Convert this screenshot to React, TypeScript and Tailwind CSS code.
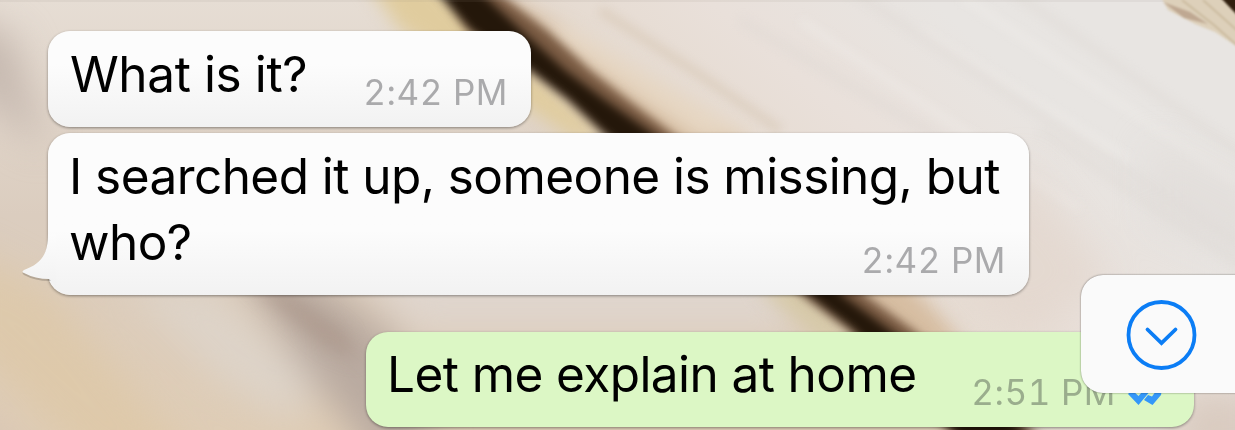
import type { ReactNode } from "react";

// blurred wooden planks used as the chat wallpaper
function Wallpaper() {
  return (
    <svg
      className="absolute inset-0 h-full w-full"
      viewBox="0 0 1235 430"
      preserveAspectRatio="none"
      colorInterpolationFilters="sRGB"
    >
      <defs>
        <linearGradient id="left" x1="0" y1="0" x2="0" y2="1">
          <stop offset="0" stopColor="#e6ddd4" />
          <stop offset="0.5" stopColor="#dbcdbf" />
          <stop offset="1" stopColor="#dfcdb6" />
        </linearGradient>
        <linearGradient id="right" gradientUnits="userSpaceOnUse" x1="690" y1="140" x2="860" y2="-60">
          <stop offset="0" stopColor="#e5dacf" />
          <stop offset="0.45" stopColor="#e9e0da" />
          <stop offset="1" stopColor="#e8e5e2" />
        </linearGradient>
        <filter id="soft1" x="-20%" y="-20%" width="140%" height="140%">
          <feGaussianBlur stdDeviation="1" />
        </filter>
        <filter id="soft5" x="-20%" y="-20%" width="140%" height="140%">
          <feGaussianBlur stdDeviation="5" />
        </filter>
        <filter id="soft9" x="-20%" y="-20%" width="140%" height="140%">
          <feGaussianBlur stdDeviation="9" />
        </filter>
        <filter id="soft18" x="-40%" y="-40%" width="180%" height="180%">
          <feGaussianBlur stdDeviation="18" />
        </filter>
      </defs>
      <rect width="1235" height="430" fill="url(#left)" />
      <path d="M460 -20H1260V460H1030L850 300L660 133Z" fill="url(#right)" />

      {/* left plank tones */}
      <g filter="url(#soft18)">
        <path d="M-40 10L15 40L45 150L-40 80Z" fill="#c6b9b0" />
        <path d="M-40 245L50 290L200 470H100L-40 340Z" fill="#dec6a2" opacity="0.6" />
        <path d="M-40 390L50 470H-40Z" fill="#d8c5b5" />
        <path d="M120 280L210 285L320 380L290 420L220 380Z" fill="#ddd3c8" />
        <path d="M235 260L310 275L400 340L440 470H385L305 370Z" fill="#b9aaa0" />
        <path d="M340 250H780L800 330H410Z" fill="#dfd5cd" />
      </g>
      <path d="M245 280L285 290L345 330L360 362L325 348Z" fill="#a58f82" opacity="0.5" filter="url(#soft9)" />

      {/* light edges and the gap between the planks */}
      <g filter="url(#soft9)">
        <path d="M365 -20H430L610 140H575L500 90L400 30Z" fill="#e0cc9e" />
        <path d="M755 285L800 285L860 340H820Z" fill="#d6c9a8" />
        <path d="M470 -20L570 30L735 140L925 300L965 345L910 350L640 140L470 0Z" fill="#d6bda1" />
        <path d="M570 30L760 140H700L530 25Z" fill="#e6d6c2" />
      </g>
      <g filter="url(#soft5)">
        <path d="M435 -12H492L548 31L590 70L628 100L678 138L868 297L916 332L1050 445H962L848 330L804 297L602 133L567 100L528 70L467 31Z" fill="#7a5b43" />
        <path d="M433 -12H476L522 31L565 70L605 100L652 133L845 297L890 330L1045 448H970L854 330L811 297L604 133L569 100L530 70L472 31Z" fill="#24170a" />
      </g>

      {/* faint grain on the right plank */}
      <g filter="url(#soft5)" fill="none" strokeWidth="9" opacity="0.35">
        <path d="M800 20L1080 210M920 30L1130 160M960 -5L1240 185" stroke="#f2efec" />
        <path d="M850 -10L1240 245M740 20L960 150" stroke="#dcd6d1" />
        <path d="M1010 -10L1250 160M1040 130L1250 270" stroke="#dcd6d1" />
        <path d="M600 10L700 75L780 130" stroke="#cdb99f" />
      </g>
      <g filter="url(#soft18)">
        <path d="M1150 140L1270 200V270L1150 220Z" fill="#dfdbd7" opacity="0.6" />
        <path d="M1020 160L1110 280L1030 340L960 290Z" fill="#e1d4c9" opacity="0.6" />
        <path d="M1180 390H1260V470H1170Z" fill="#d9cbc0" />
      </g>
      <rect width="1235" height="2" fill="#8f8880" opacity="0.1" />

      {/* next plank edge in the corner */}
      <g filter="url(#soft1)">
        <path d="M1160 -5H1223L1245 22V52L1215 32L1195 24L1168 10Z" fill="#ddd0ba" />
        <path d="M1163 2L1190 12L1208 24L1184 18Z" fill="#bfa892" />
        <path d="M1182 0L1214 25L1240 48M1203 0L1240 33" stroke="#cbbb9f" strokeWidth="2" fill="none" />
        <path d="M1220 -3H1240V18Z" fill="#31200f" />
      </g>
    </svg>
  );
}

function Time({ children }: { children: ReactNode }) {
  return (
    <span className="block text-[35px] leading-[42px] tracking-[0.55px] tabular-nums whitespace-nowrap">
      {children}
    </span>
  );
}

function ReadTicks() {
  return (
    <svg className="h-[24px] w-[34px]" viewBox="0 0 34 24" fill="#3497f9">
      <path d="M0 11L4 7L10.500 13L22 0L26 3L18.500 12.500L10.500 22Z" />
      <path d="M16 17L20 12L24 13.500L31 4L34 6L33 12L24.500 22Z" />
    </svg>
  );
}

function Tail() {
  return (
    <svg className="absolute top-[96px] -left-[26px] h-[66px] w-[40px]" viewBox="0 0 40 66">
      <defs>
        <linearGradient id="tail" x1="0" y1="0" x2="0" y2="1">
          <stop offset="0" stopColor="#fcfcfc" />
          <stop offset="1" stopColor="#f2f2f2" />
        </linearGradient>
      </defs>
      <path d="M26 5C26 27 18 35 2 41Q-1 43 2 45Q13 51 27.500 51L33 50V5Z" transform="translate(0 1)" fill="#000" opacity="0.18" />
      <path d="M26 5C26 27 18 35 2 41Q-1 43 2 44Q13 50 27.500 50L34 58V5Z" fill="url(#tail)" />
    </svg>
  );
}

export default function App() {
  return (
    <div className="relative h-[430px] w-[1235px] overflow-hidden bg-[#e2d8ce] font-[Inter,sans-serif] text-black">
      <Wallpaper />

      <div className="relative flex flex-col pt-[31px] pl-[48px]">
        <div className="flex h-[96px] w-[483px] justify-between rounded-[22px] bg-linear-to-b from-[#fcfcfc] from-35% to-[#f2f2f2] pr-[23px] pl-[22px] shadow-[0_1px_3px_rgba(0,0,0,0.4)]">
          <p className="pt-[10px] text-[49.5px] leading-[66px] tracking-[-0.4px] whitespace-nowrap">What is it?</p>
          <div className="pt-[40px] text-[#aaaaac]">
            <Time>2:42 PM</Time>
          </div>
        </div>

        <div className="relative mt-[6px] h-[162px] w-[981px] rounded-[22px] bg-linear-to-b from-[#fcfcfc] from-60% to-[#f2f2f2] pl-[21px] shadow-[0_1px_3px_rgba(0,0,0,0.4)]">
          <Tail />
          <p className="relative pt-[10px] text-[49.5px] leading-[66px] tracking-[-0.56px] whitespace-nowrap">
            I searched it up, someone is missing, but
            <br />
            who?
          </p>
          <div className="absolute right-[23px] bottom-[14px] text-[#aaaaac]">
            <Time>2:42 PM</Time>
          </div>
        </div>

        <div className="mt-[37px] ml-[318px] flex h-[95px] w-[828px] justify-between rounded-[22px] bg-[#dcf7c5] pr-[32px] pl-[21px] shadow-[0_1px_3px_rgba(0,0,0,0.4)]">
          <p className="pt-[9px] text-[49.5px] leading-[66px] tracking-[-0.58px] whitespace-nowrap">
            Let me explain at home
          </p>
          <div className="flex gap-[12px] pt-[39px] text-[#9aad8d]">
            <Time>2:51 PM</Time>
            <div className="pt-[12px]">
              <ReadTicks />
            </div>
          </div>
        </div>
      </div>

      {/* scroll to bottom */}
      <button className="absolute top-[275px] left-[1081px] flex h-[118px] w-[180px] items-start rounded-l-[22px] bg-[#fafafa] pt-[24px] pl-[45px] shadow-[0_0_2px_rgba(0,0,0,0.55)]">
        <svg className="size-[72px]" viewBox="0 0 72 72" fill="none" stroke="#0b7df5">
          <circle cx="35.500" cy="36" r="33" strokeWidth="3.8" />
          <path d="M21.500 30.500L35.500 44L49.500 30.500" strokeWidth="3.8" strokeLinecap="round" />
        </svg>
      </button>
    </div>
  );
}
